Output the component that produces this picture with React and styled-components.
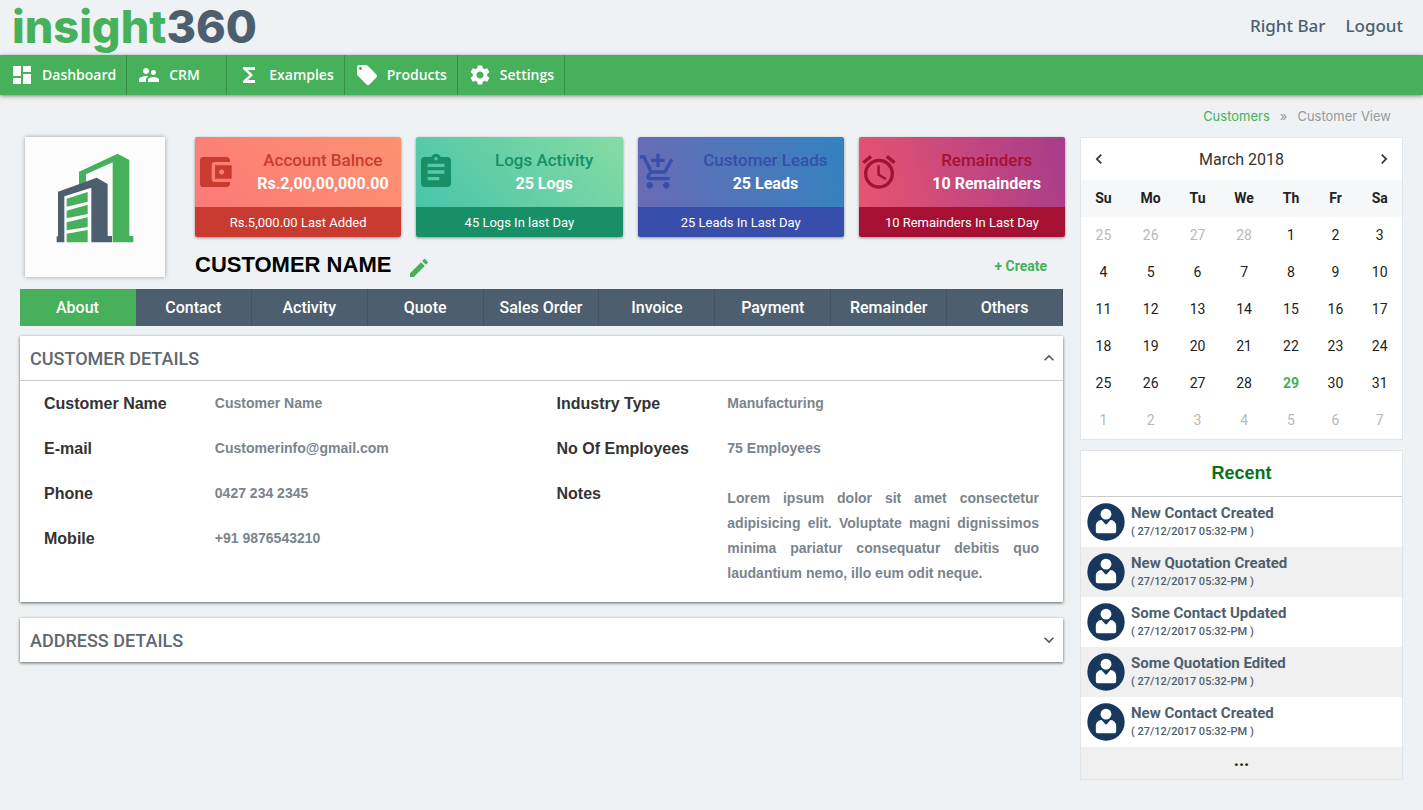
import React, { useState } from "react";
import styled, { createGlobalStyle } from "styled-components";
import {
  MdDashboard,
  MdSupervisorAccount,
  MdFunctions,
  MdLocalOffer,
  MdSettings,
  MdAccountBalanceWallet,
  MdAssignment,
  MdAddShoppingCart,
  MdAlarm,
  MdModeEdit,
  MdKeyboardArrowUp,
  MdKeyboardArrowDown,
  MdKeyboardArrowLeft,
  MdKeyboardArrowRight,
} from "react-icons/md";

const green = "#46b05a";
const slate = "#4d5f6e";
const roboto = 'Roboto, "Liberation Sans", sans-serif';
const arial = '"Liberation Sans", Arial, sans-serif';
const humanist = '"Open Sans", "Noto Sans", sans-serif';

const GlobalStyle = createGlobalStyle`
  *, *::before, *::after { box-sizing: border-box; }
  body {
    margin: 0;
    background: #eef2f5;
    color: #222;
    font-family: ${roboto};
    font-size: 14px;
  }
  h1, h2, h3, p, dl, dd, dt, ul, ol { margin: 0; padding: 0; }
  ul, ol { list-style: none; }
  a { color: inherit; text-decoration: none; }
  button { border: 0; padding: 0; background: none; color: inherit; font: inherit; cursor: pointer; }
  svg { display: block; flex: none; }
`;

const Header = styled.header`
  display: flex;
  align-items: flex-start;
  justify-content: space-between;
  height: 55px;
  padding: 0 20px 0 12px;
`;

const Brand = styled.a`
  font: 800 45px/54px Inter, sans-serif;
  color: ${green};
`;

const BrandNumber = styled.span`
  color: ${slate};
`;

const HeaderLinks = styled.div`
  display: flex;
  gap: 20px;
  font: 500 17px/52px "Noto Sans", "Open Sans", sans-serif;
  color: ${slate};
`;

const NavBar = styled.nav`
  display: flex;
  height: 40px;
  background: ${green};
  box-shadow: 0 1px 4px rgba(0, 0, 0, 0.45);
`;

const NavItem = styled.a`
  display: flex;
  align-items: center;
  gap: 8px;
  min-width: 100px;
  padding: 0 10px;
  border-right: 1px solid #338f45;
  color: #fff;
  font: 600 14px/20px ${humanist};
`;

const Page = styled.div`
  padding: 0 20px 30px;
`;

const Breadcrumb = styled.nav`
  display: flex;
  justify-content: flex-end;
  align-items: center;
  gap: 10px;
  height: 42px;
  padding-right: 12px;
  font: 400 13px/16px Inter, ${roboto};
  color: #999;
`;

const CrumbLink = styled.a`
  color: ${green};
`;

const Columns = styled.div`
  display: grid;
  grid-template-columns: minmax(0, 1fr) 323px;
  gap: 15px;
  align-items: start;
`;

const Main = styled.main`
  display: flex;
  flex-direction: column;
`;

const Profile = styled.section`
  display: grid;
  grid-template-columns: 140px minmax(0, 1fr);
  gap: 30px;
  padding: 0 0 9px 5px;
`;

const LogoBox = styled.div`
  height: 140px;
  background: #fcfcfc;
  box-shadow: 0 0 4px rgba(0, 0, 0, 0.35);
`;

const Stats = styled.div`
  display: grid;
  grid-template-columns: repeat(4, minmax(0, 1fr));
  gap: 15px;
`;

const StatCard = styled.article`
  overflow: hidden;
  border-radius: 2px;
  box-shadow: 0 1px 3px rgba(0, 0, 0, 0.4);
`;

const StatTop = styled.div`
  display: grid;
  grid-template-columns: 1fr 3fr;
  align-items: center;
  height: 70px;
  color: ${(p) => p.$ink};
  background: linear-gradient(${(p) => p.$angle}, ${(p) => p.$from}, ${(p) => p.$to});
`;

const StatText = styled.div`
  padding-right: 2px;
  font-size: 16px;
  line-height: 24px;
  font-weight: 700;
  text-align: center;
  white-space: nowrap;
`;

const StatTitle = styled.h3`
  font-size: 17px;
  font-weight: 500;
`;

const StatValue = styled.p`
  color: #fff;
`;

const StatFooter = styled.p`
  height: 30px;
  font-size: 13px;
  line-height: 31px;
  font-weight: 400;
  text-align: center;
  color: #fff;
  background: ${(p) => p.$bg};
`;

const NameRow = styled.div`
  display: flex;
  align-items: flex-end;
  gap: 16px;
  height: 43px;
  padding-right: 18px;
`;

const CustomerName = styled.h1`
  font: 900 22px/30px ${arial};
  color: #000;
`;

const IconButton = styled.button`
  display: grid;
  place-items: center;
  color: ${(p) => p.$color || "inherit"};
`;

const CreateButton = styled.button`
  margin-left: auto;
  line-height: 28px;
  font-weight: 700;
  color: ${green};
`;

const Tabs = styled.div`
  display: grid;
  grid-template-columns: repeat(9, minmax(0, 1fr));
  margin-right: 2px;
`;

const Tab = styled.button`
  height: 37px;
  font-size: 16px;
  font-weight: 500;
  color: #fff;
  background: ${(p) => (p.$active ? green : slate)};
  border-right: 1px solid ${(p) => (p.$active ? green : "#43535f")};
`;

const Panels = styled.div`
  display: flex;
  flex-direction: column;
  gap: 16px;
  padding: 10px 2px 0 0;
`;

const Panel = styled.section`
  background: #fff;
  box-shadow: 0 1px 3px rgba(0, 0, 0, 0.6);
`;

const PanelHeader = styled.button`
  display: flex;
  align-items: center;
  justify-content: space-between;
  width: 100%;
  height: 44px;
  padding: 0 4px 0 10px;
  color: #555;
`;

const PanelTitle = styled.h2`
  font-size: 18px;
  font-weight: 500;
  color: #5f6870;
`;

const Details = styled.div`
  display: grid;
  grid-template-columns: 1fr 1fr;
  padding: 0 9px 16px;
  border-top: 1px solid #ccc;
`;

const FieldList = styled.dl`
  display: flex;
  flex-direction: column;
`;

const Field = styled.div`
  display: grid;
  grid-template-columns: 1fr 2fr;
`;

const FieldLabel = styled.dt`
  padding: 0 0 0 15px;
  font: 700 16px/45px ${arial};
  color: #333;
  white-space: nowrap;
`;

const FieldValue = styled.dd`
  padding: ${(p) => (p.$long ? "15px" : "0")} 15px 0;
  font: 700 14px/${(p) => (p.$long ? "25px" : "45px")} ${arial};
  text-align: ${(p) => (p.$long ? "justify" : "left")};
  color: #7b848d;
`;

const Side = styled.aside`
  display: flex;
  flex-direction: column;
  gap: 10px;
`;

const SideCard = styled.section`
  background: #fff;
  border: 1px solid #e1e4e8;
`;

const MonthBar = styled.div`
  display: flex;
  align-items: center;
  justify-content: space-between;
  height: 42px;
  padding: 0 8px;
  color: #333;
`;

const MonthName = styled.h2`
  font-size: 16px;
  font-weight: 400;
`;

const Calendar = styled.table`
  width: 100%;
  border-collapse: collapse;
  text-align: center;
  line-height: 17px;

  th {
    padding: 10px;
    background: #f5f7f9;
  }
`;

const Day = styled.td`
  padding: 10px;
  color: ${(p) => (p.$today ? green : p.$muted ? "#b8b8b8" : "#222")};
  font-weight: ${(p) => (p.$today ? 700 : 400)};
`;

const RecentTitle = styled.h2`
  height: 46px;
  border-bottom: 1px solid #ccc;
  font: 700 18px/44px ${arial};
  text-align: center;
  color: #0c701a;
`;

const RecentItem = styled.li`
  display: flex;
  align-items: center;
  gap: 6px;
  height: 50px;
  padding: 0 6px;
  color: ${slate};

  &:nth-child(even) {
    background: #f0f0f0;
  }
`;

const RecentName = styled.h3`
  font-size: 15px;
  line-height: 19px;
  font-weight: 700;
`;

const RecentTime = styled.p`
  font-size: 11px;
  line-height: 18px;
  font-weight: 500;
`;

const MoreButton = styled.button`
  display: flex;
  justify-content: center;
  width: 100%;
  height: 32px;
  background: #f0f0f0;
  color: #222;
  font: 700 18px/26px ${roboto};
`;

const Building = () => (
  <svg width="140" height="140" viewBox="45 36 420 420" role="img" aria-label="Company">
    <path
      fill={green}
      d="M207 180V140L323 86L358 105V333H370V352H308V333L308 112L228 148V172Z"
    />
    <path
      fill={slate}
      d="M144 200L260 158L293 177V333H306V352H244V188L163 214V352H140V334H144Z"
    />
    <path
      fill={green}
      d="M170 221L233 201V230L170 245ZM170 257L233 239V267L170 280ZM170 292L233 277V306L170 316ZM170 326L233 315V352H170Z"
    />
  </svg>
);

const Avatar = () => (
  <svg width="38" height="38" viewBox="37 190 112 112" aria-hidden="true">
    <circle cx="93" cy="246" r="55" fill="#17375c" />
    <circle cx="93" cy="223" r="16" fill="#fff" />
    <path
      fill="#fff"
      d="M63 274V258C63 248 69 241 80 240L91 253H95L106 240C117 241 123 248 123 258V274Q123 279 118 279H68Q63 279 63 274Z"
    />
  </svg>
);

const navItems = [
  ["Dashboard", MdDashboard],
  ["CRM", MdSupervisorAccount],
  ["Examples", MdFunctions],
  ["Products", MdLocalOffer],
  ["Settings", MdSettings],
];

const stats = [
  {
    title: "Account Balnce",
    value: "Rs.2,00,00,000.00",
    footer: "Rs.5,000.00 Last Added",
    icon: MdAccountBalanceWallet,
    angle: "45deg",
    from: "#fd7a77",
    to: "#fb9270",
    ink: "#c93a30",
  },
  {
    title: "Logs Activity",
    value: "25 Logs",
    footer: "45 Logs In last Day",
    icon: MdAssignment,
    angle: "45deg",
    from: "#48c5a9",
    to: "#86dba3",
    ink: "#178f67",
  },
  {
    title: "Customer Leads",
    value: "25 Leads",
    footer: "25 Leads In Last Day",
    icon: MdAddShoppingCart,
    angle: "75deg",
    from: "#6a6bb5",
    to: "#3382c0",
    ink: "#374eab",
  },
  {
    title: "Remainders",
    value: "10 Remainders",
    footer: "10 Remainders In Last Day",
    icon: MdAlarm,
    angle: "75deg",
    from: "#e95470",
    to: "#a63c8b",
    ink: "#a51033",
  },
];

const tabs = [
  "About",
  "Contact",
  "Activity",
  "Quote",
  "Sales Order",
  "Invoice",
  "Payment",
  "Remainder",
  "Others",
];

const contactFields = [
  ["Customer Name", "Customer Name"],
  ["E-mail", "Customerinfo@gmail.com"],
  ["Phone", "0427 234 2345"],
  ["Mobile", "+91 9876543210"],
];

const companyFields = [
  ["Industry Type", "Manufacturing"],
  ["No Of Employees", "75 Employees"],
  [
    "Notes",
    "Lorem ipsum dolor sit amet consectetur adipisicing elit. Voluptate magni dignissimos minima pariatur consequatur debitis quo laudantium nemo, illo eum odit neque.",
  ],
];

const weekdays = ["Su", "Mo", "Tu", "We", "Th", "Fr", "Sa"];

/* March 2018 starts on a Thursday; six weeks are shown. */
const weeks = Array.from({ length: 6 }, (_, w) =>
  Array.from({ length: 7 }, (_, d) => {
    const n = w * 7 + d - 3;
    if (n < 1) return { label: 28 + n, muted: true };
    if (n > 31) return { label: n - 31, muted: true };
    return { label: n, today: n === 29 };
  })
);

const recent = [
  "New Contact Created",
  "New Quotation Created",
  "Some Contact Updated",
  "Some Quotation Edited",
  "New Contact Created",
];

const Fields = ({ items }) => (
  <FieldList>
    {items.map(([label, value]) => (
      <Field key={label}>
        <FieldLabel>{label}</FieldLabel>
        <FieldValue $long={label === "Notes"}>{value}</FieldValue>
      </Field>
    ))}
  </FieldList>
);

const Section = ({ title, initiallyOpen, children }) => {
  const [open, setOpen] = useState(Boolean(initiallyOpen));
  const Arrow = open ? MdKeyboardArrowUp : MdKeyboardArrowDown;
  return (
    <Panel>
      <PanelHeader type="button" aria-expanded={open} onClick={() => setOpen(!open)}>
        <PanelTitle>{title}</PanelTitle>
        <Arrow size={20} />
      </PanelHeader>
      {open && children}
    </Panel>
  );
};

export default function App() {
  const [tab, setTab] = useState("About");
  return (
    <>
      <GlobalStyle />
      <Header>
        <Brand href="#">
          insight<BrandNumber>360</BrandNumber>
        </Brand>
        <HeaderLinks>
          <a href="#right-bar">Right Bar</a>
          <a href="#logout">Logout</a>
        </HeaderLinks>
      </Header>
      <NavBar>
        {navItems.map(([label, Icon]) => (
          <NavItem key={label} href={`#${label.toLowerCase()}`}>
            <Icon size={24} />
            {label}
          </NavItem>
        ))}
      </NavBar>
      <Page>
        <Breadcrumb aria-label="Breadcrumb">
          <CrumbLink href="#customers">Customers</CrumbLink>
          <span>»</span>
          <span>Customer View</span>
        </Breadcrumb>
        <Columns>
          <Main>
            <Profile>
              <LogoBox>
                <Building />
              </LogoBox>
              <div>
                <Stats>
                  {stats.map((s) => (
                    <StatCard key={s.title}>
                      <StatTop $ink={s.ink} $angle={s.angle} $from={s.from} $to={s.to}>
                        <s.icon size={40} />
                        <StatText>
                          <StatTitle>{s.title}</StatTitle>
                          <StatValue>{s.value}</StatValue>
                        </StatText>
                      </StatTop>
                      <StatFooter $bg={s.ink}>{s.footer}</StatFooter>
                    </StatCard>
                  ))}
                </Stats>
                <NameRow>
                  <CustomerName>CUSTOMER NAME</CustomerName>
                  <IconButton type="button" aria-label="Edit customer" $color={green}>
                    <MdModeEdit size={24} />
                  </IconButton>
                  <CreateButton type="button">+ Create</CreateButton>
                </NameRow>
              </div>
            </Profile>
            <Tabs role="tablist">
              {tabs.map((t) => (
                <Tab
                  key={t}
                  type="button"
                  role="tab"
                  aria-selected={t === tab}
                  $active={t === tab}
                  onClick={() => setTab(t)}
                >
                  {t}
                </Tab>
              ))}
            </Tabs>
            <Panels>
              <Section title="CUSTOMER DETAILS" initiallyOpen>
                <Details>
                  <Fields items={contactFields} />
                  <Fields items={companyFields} />
                </Details>
              </Section>
              <Section title="ADDRESS DETAILS" />
            </Panels>
          </Main>
          <Side>
            <SideCard>
              <MonthBar>
                <IconButton type="button" aria-label="Previous month">
                  <MdKeyboardArrowLeft size={20} />
                </IconButton>
                <MonthName>March 2018</MonthName>
                <IconButton type="button" aria-label="Next month">
                  <MdKeyboardArrowRight size={20} />
                </IconButton>
              </MonthBar>
              <Calendar>
                <thead>
                  <tr>
                    {weekdays.map((d) => (
                      <th key={d} scope="col">
                        {d}
                      </th>
                    ))}
                  </tr>
                </thead>
                <tbody>
                  {weeks.map((week, i) => (
                    <tr key={i}>
                      {week.map((d) => (
                        <Day key={d.label} $muted={d.muted} $today={d.today}>
                          {d.label}
                        </Day>
                      ))}
                    </tr>
                  ))}
                </tbody>
              </Calendar>
            </SideCard>
            <SideCard>
              <RecentTitle>Recent</RecentTitle>
              <ul>
                {recent.map((name, i) => (
                  <RecentItem key={i}>
                    <Avatar />
                    <div>
                      <RecentName>{name}</RecentName>
                      <RecentTime>( 27/12/2017 05:32-PM )</RecentTime>
                    </div>
                  </RecentItem>
                ))}
              </ul>
              <MoreButton type="button" aria-label="Show more">
                ...
              </MoreButton>
            </SideCard>
          </Side>
        </Columns>
      </Page>
    </>
  );
}
